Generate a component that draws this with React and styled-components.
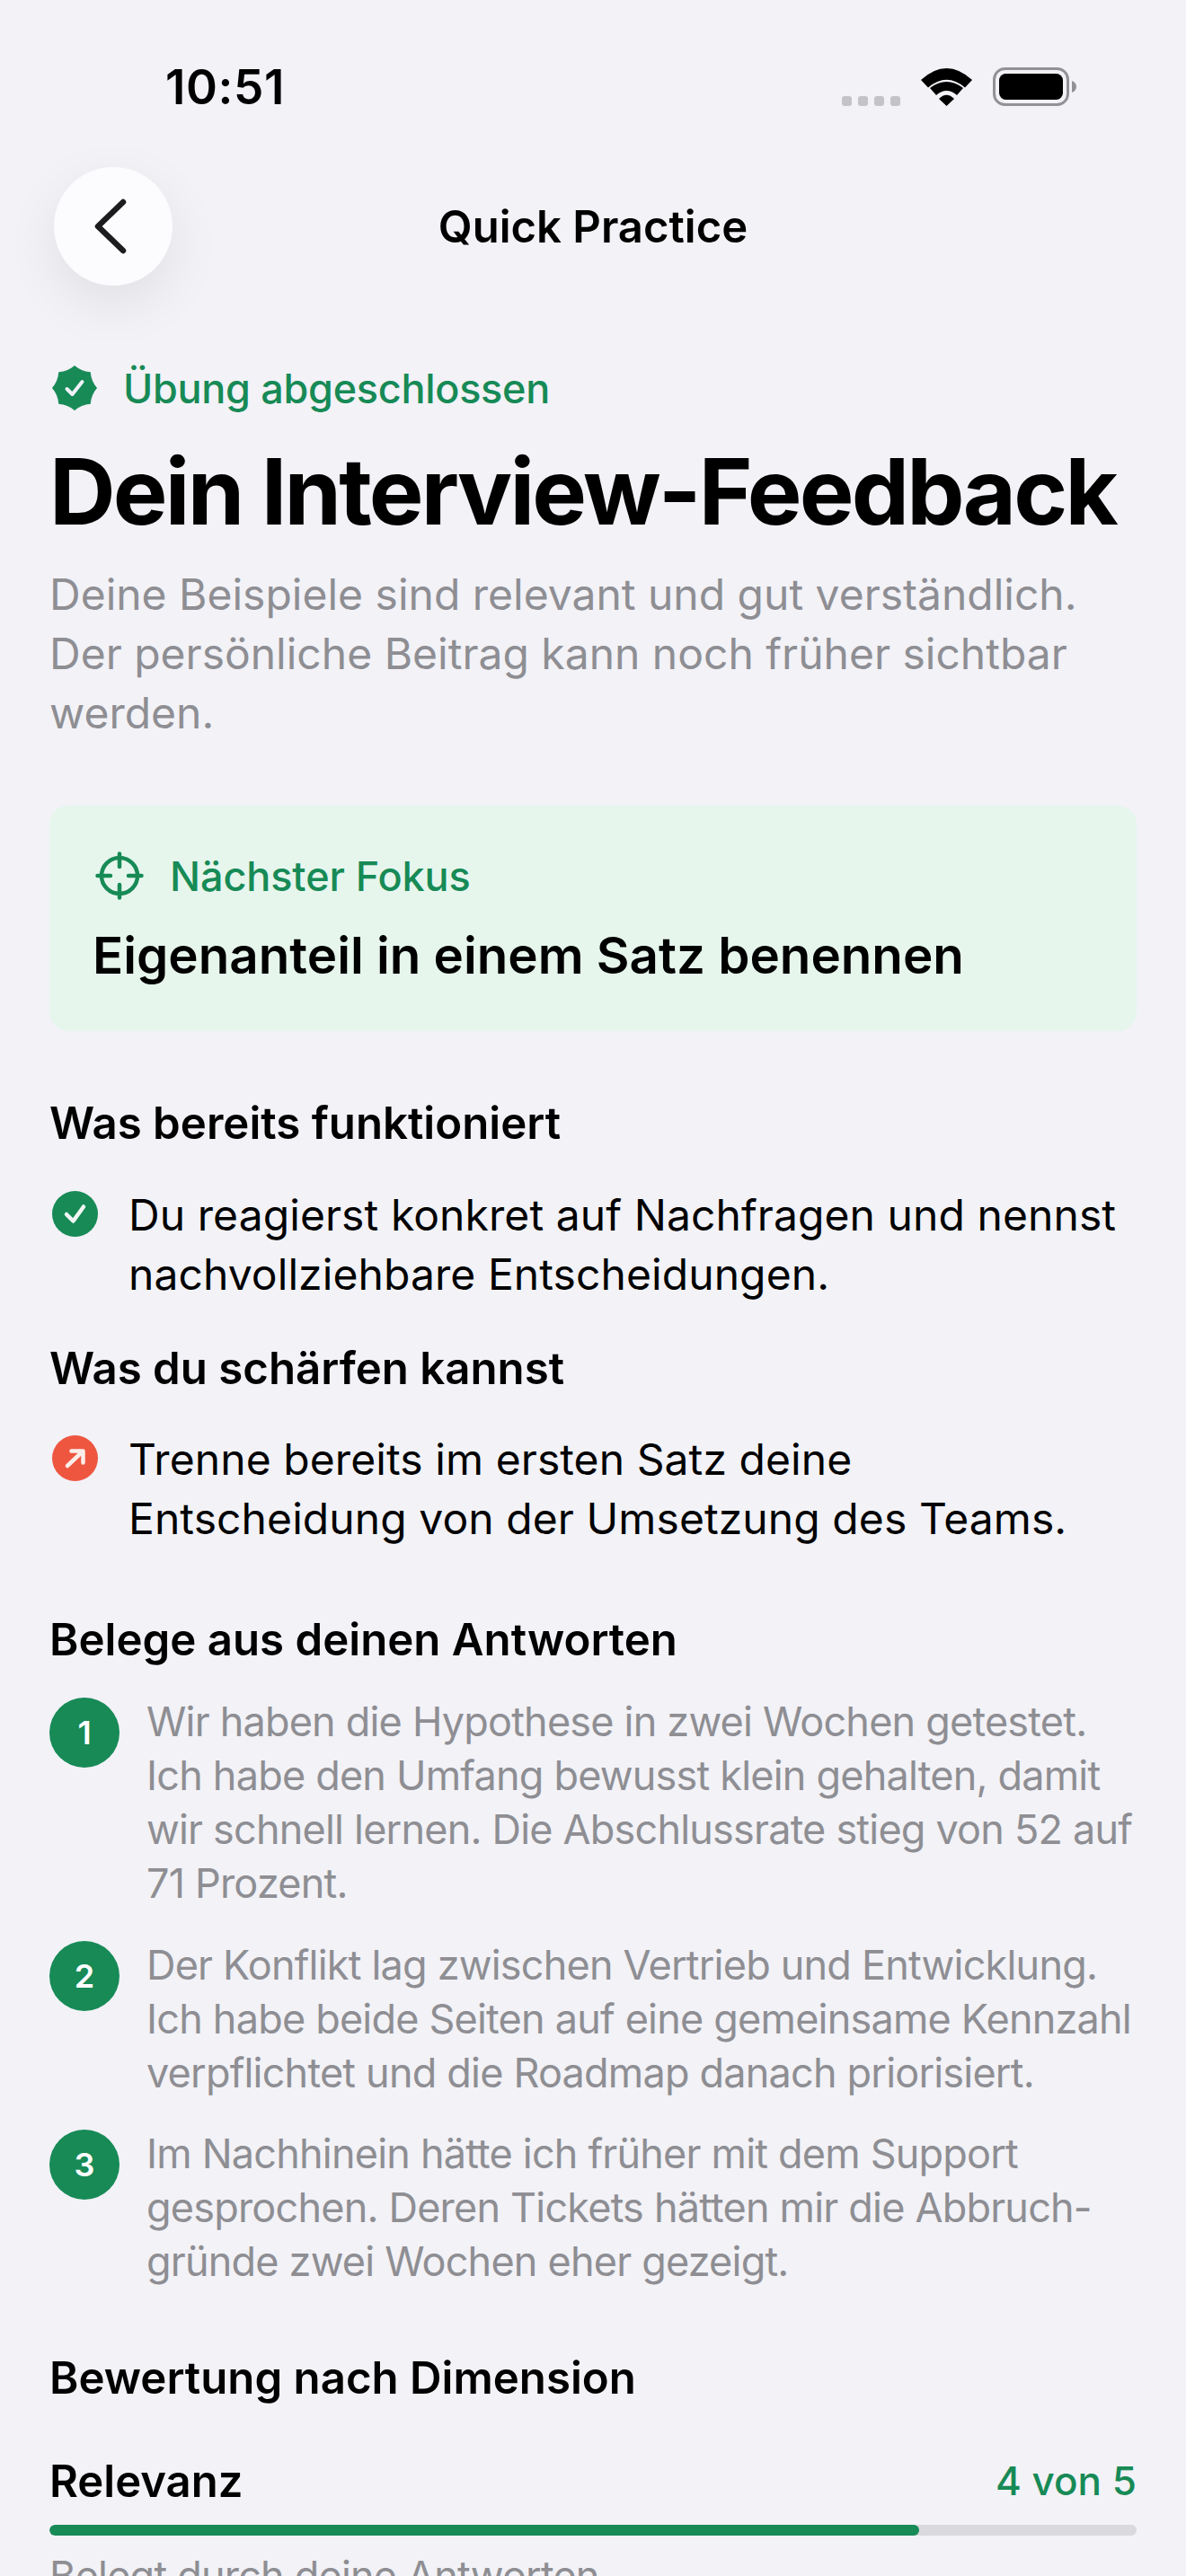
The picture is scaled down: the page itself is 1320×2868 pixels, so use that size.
import React from "react"
import styled, { createGlobalStyle } from "styled-components"

const green = "#178a56"
const grey = "#8e8e93"

const GlobalStyle = createGlobalStyle`
    html, body {
        margin: 0;
        padding: 0;
        background: #f2f2f7;
    }
    body {
        font-family: Inter, "Liberation Sans", sans-serif;
        color: #000;
    }
`

const Page = styled.div`
    width: 1320px;
    height: 2868px;
    overflow: hidden;
    background: #f2f2f7;
`

const StatusBar = styled.div`
    height: 186px;
    box-sizing: border-box;
    padding: 75px 122px 0 184px;
    display: flex;
    justify-content: space-between;
    align-items: flex-start;
`

const Time = styled.div`
    font-size: 53px;
    line-height: 44px;
    font-weight: 600;
    letter-spacing: 0.6px;
`

const StatusIcons = styled.div`
    display: flex;
    align-items: flex-end;
    gap: 23px;
    height: 43px;
`

const NavBar = styled.div`
    display: grid;
    grid-template-columns: 132px 1fr 132px;
    align-items: center;
    padding: 0 60px;
`

const BackButton = styled.div`
    width: 132px;
    height: 132px;
    padding-right: 6px;
    box-sizing: border-box;
    border-radius: 50%;
    background: #fcfcfe;
    box-shadow: 0 20px 60px rgba(0, 0, 0, 0.08);
    display: flex;
    align-items: center;
    justify-content: center;
`

const NavTitle = styled.div`
    text-align: center;
    font-size: 49px;
    font-weight: 600;
`

const Content = styled.div`
    padding: 0 55px;
`

const DoneRow = styled.div`
    display: flex;
    align-items: center;
    gap: 29px;
    height: 50px;
    margin-top: 89px;
    padding-left: 3px;
    color: ${green};
    font-size: 45px;
    font-weight: 550;
    letter-spacing: -0.3px;
`

const Heading = styled.h1`
    margin: 30px 0 0;
    font-size: 102px;
    line-height: 120px;
    font-weight: 700;
    letter-spacing: -2.8px;
    white-space: nowrap;
`

const Intro = styled.p`
    margin: 22px 0 0;
    font-size: 48px;
    line-height: 66px;
    color: ${grey};
`

const FocusCard = styled.div`
    margin-top: 70px;
    height: 251px;
    box-sizing: border-box;
    padding: 51px 50px 0 51px;
    border-radius: 21px;
    background: #e6f6ed;
`

const FocusLabel = styled.div`
    display: flex;
    align-items: center;
    gap: 29px;
    height: 54px;
    color: ${green};
    font-size: 45px;
    font-weight: 550;
    letter-spacing: -0.1px;
`

const FocusText = styled.div`
    margin: 30px 0 0 -3px;
    font-size: 56.5px;
    line-height: 64px;
    font-weight: 600;
`

const SectionTitle = styled.h2`
    margin: ${props => props.$top}px 0 0;
    font-size: 49.2px;
    line-height: 60px;
    font-weight: 600;
`

const Point = styled.div`
    display: flex;
    margin-top: ${props => props.$top}px;
    font-size: 48px;
    line-height: 66px;
    letter-spacing: 0.08px;
`

const PointIcon = styled.div`
    width: 51px;
    height: 51px;
    flex: none;
    margin: 6px 34px 0 3px;
    border-radius: 50%;
    background: ${props => props.$color};
    display: flex;
    align-items: center;
    justify-content: center;
`

const Evidence = styled.div`
    display: flex;
    margin-top: ${props => props.$top}px;
    font-size: 45px;
    line-height: 60px;
    letter-spacing: -0.8px;
    white-space: nowrap;
    color: ${grey};
`

const EvidenceNumber = styled.div`
    width: 78px;
    height: 78px;
    flex: none;
    margin: 3px 30px 0 0;
    border-radius: 50%;
    background: ${green};
    color: #fff;
    font-size: 36px;
    font-weight: 600;
    letter-spacing: 0;
    display: flex;
    align-items: center;
    justify-content: center;
`

const ScoreRow = styled.div`
    display: flex;
    justify-content: space-between;
    align-items: center;
    margin-top: 55px;
    height: 60px;
`

const ScoreName = styled.div`
    font-size: 49px;
    font-weight: 600;
`

const ScoreValue = styled.div`
    font-size: 44px;
    font-weight: 550;
    color: ${green};
`

const Track = styled.div`
    margin-top: 19px;
    height: 12px;
    border-radius: 6px;
    background: #d9d9de;
    overflow: hidden;
`

const Fill = styled.div`
    height: 100%;
    border-radius: 6px;
    background: ${green};
`

const ScoreNote = styled.div`
    margin-top: 15px;
    font-size: 45px;
    line-height: 60px;
    letter-spacing: -0.8px;
    color: ${grey};
`

const SignalDots = () =>
    <svg width="65" height="11" viewBox="0 0 65 11">
        {[0, 18, 36, 54].map(x => <rect key={x} x={x} width="11" height="11" rx="3" fill="#c4c4c8"/>)}
    </svg>

const Wifi = () =>
    <svg width="57" height="42" viewBox="0 0 57 42">
        <path d="M0 13Q28.5 -13 57 13L49 21.5Q28.5 4 8 21.5Z"/>
        <path d="M10 22Q28.5 8 47 22L40 30Q28.5 20 17 30Z"/>
        <path d="M20 34Q28.5 25.5 37 34L28.5 42Z"/>
    </svg>

const Battery = () =>
    <svg width="93" height="43" viewBox="0 0 93 43">
        <rect x="1.5" y="1.5" width="82" height="40" rx="12" fill="none" stroke="#929296" strokeWidth="3"/>
        <rect x="7" y="7" width="71" height="29" rx="7.5"/>
        <path d="M88 15c3 1 5 3.500 5 6.500s-2 5.500-5 6.500z" fill="#929296"/>
    </svg>

const Chevron = () =>
    <svg width="40" height="64" viewBox="0 0 40 64" fill="none" stroke="#1c1c1e" strokeWidth="6.500" strokeLinecap="round" strokeLinejoin="round">
        <path d="M34 5L6 32L34 59"/>
    </svg>

// eight soft lobes round the centre
const badgePath = (() => {
    let d = ""
    for (let i = 0; i < 8; i++) {
        const a = (i * Math.PI) / 4 - Math.PI / 2
        const b = a + Math.PI / 8
        const c = a + Math.PI / 4
        const point = (r, t) => `${(25 + r * Math.cos(t)).toFixed(2)} ${(25 + r * Math.sin(t)).toFixed(2)}`
        if (i === 0) d += `M${point(24.5, a)}`
        d += `Q${point(19.5, b)} ${point(24.5, c)}`
    }
    return d + "Z"
})()

const DoneBadge = () =>
    <svg width="50" height="50" viewBox="0 0 50 50">
        <path d={badgePath} fill={green} stroke={green} strokeWidth="1" strokeLinejoin="round"/>
        <path d="M16.500 26L22.500 32L33.500 18" fill="none" stroke="#f2f2f7" strokeWidth="4" strokeLinecap="round" strokeLinejoin="round"/>
    </svg>

const Target = () =>
    <svg width="54" height="54" viewBox="0 0 54 54" fill="none" stroke={green} strokeWidth="4.500" strokeLinecap="round">
        <circle cx="27" cy="27" r="20"/>
        <path d="M27 2.500V17M27 37V51.500M2.500 27H17M37 27H51.500"/>
    </svg>

const Check = () =>
    <svg width="51" height="51" viewBox="0 0 51 51" fill="none" stroke="#f2f7f4" strokeWidth="4.500" strokeLinecap="round" strokeLinejoin="round">
        <path d="M16 26L23.500 33.500L35 17.500"/>
    </svg>

const ArrowUpRight = () =>
    <svg width="51" height="51" viewBox="0 0 51 51" fill="none" stroke="#fbeeea" strokeWidth="4.500" strokeLinecap="round" strokeLinejoin="round">
        <path d="M17 34L34 18M21.500 17.500H34.500V30.500"/>
    </svg>

const App = () =>
    <Page>
        <GlobalStyle/>
        <StatusBar>
            <Time>10:51</Time>
            <StatusIcons>
                <SignalDots/>
                <Wifi/>
                <Battery/>
            </StatusIcons>
        </StatusBar>
        <NavBar>
            <BackButton><Chevron/></BackButton>
            <NavTitle>Quick Practice</NavTitle>
        </NavBar>
        <Content>
            <DoneRow><DoneBadge/>Übung abgeschlossen</DoneRow>
            <Heading>Dein Interview-Feedback</Heading>
            <Intro>
                Deine Beispiele sind relevant und gut verständlich.<br/>
                Der persönliche Beitrag kann noch früher sichtbar<br/>
                werden.
            </Intro>
            <FocusCard>
                <FocusLabel><Target/>Nächster Fokus</FocusLabel>
                <FocusText>Eigenanteil in einem Satz benennen</FocusText>
            </FocusCard>
            <SectionTitle $top={72}>Was bereits funktioniert</SectionTitle>
            <Point $top={40}>
                <PointIcon $color={green}><Check/></PointIcon>
                <div>
                    Du reagierst konkret auf Nachfragen und nennst<br/>
                    nachvollziehbare Entscheidungen.
                </div>
            </Point>
            <SectionTitle $top={41}>Was du schärfen kannst</SectionTitle>
            <Point $top={39}>
                <PointIcon $color="#ee5640"><ArrowUpRight/></PointIcon>
                <div>
                    Trenne bereits im ersten Satz deine<br/>
                    Entscheidung von der Umsetzung des Teams.
                </div>
            </Point>
            <SectionTitle $top={71}>Belege aus deinen Antworten</SectionTitle>
            <Evidence $top={32}>
                <EvidenceNumber>1</EvidenceNumber>
                <div>
                    Wir haben die Hypothese in zwei Wochen getestet.<br/>
                    Ich habe den Umfang bewusst klein gehalten, damit<br/>
                    wir schnell lernen. Die Abschlussrate stieg von 52 auf<br/>
                    71 Prozent.
                </div>
            </Evidence>
            <Evidence $top={31}>
                <EvidenceNumber>2</EvidenceNumber>
                <div>
                    Der Konflikt lag zwischen Vertrieb und Entwicklung.<br/>
                    Ich habe beide Seiten auf eine gemeinsame Kennzahl<br/>
                    verpflichtet und die Roadmap danach priorisiert.
                </div>
            </Evidence>
            <Evidence $top={30}>
                <EvidenceNumber>3</EvidenceNumber>
                <div>
                    Im Nachhinein hätte ich früher mit dem Support<br/>
                    gesprochen. Deren Tickets hätten mir die Abbruch-<br/>
                    gründe zwei Wochen eher gezeigt.
                </div>
            </Evidence>
            <SectionTitle $top={69}>Bewertung nach Dimension</SectionTitle>
            <ScoreRow>
                <ScoreName>Relevanz</ScoreName>
                <ScoreValue>4 von 5</ScoreValue>
            </ScoreRow>
            <Track><Fill style={{ width: `${(4 / 5) * 100}%` }}/></Track>
            <ScoreNote>Belegt durch deine Antworten</ScoreNote>
        </Content>
    </Page>

export default App
